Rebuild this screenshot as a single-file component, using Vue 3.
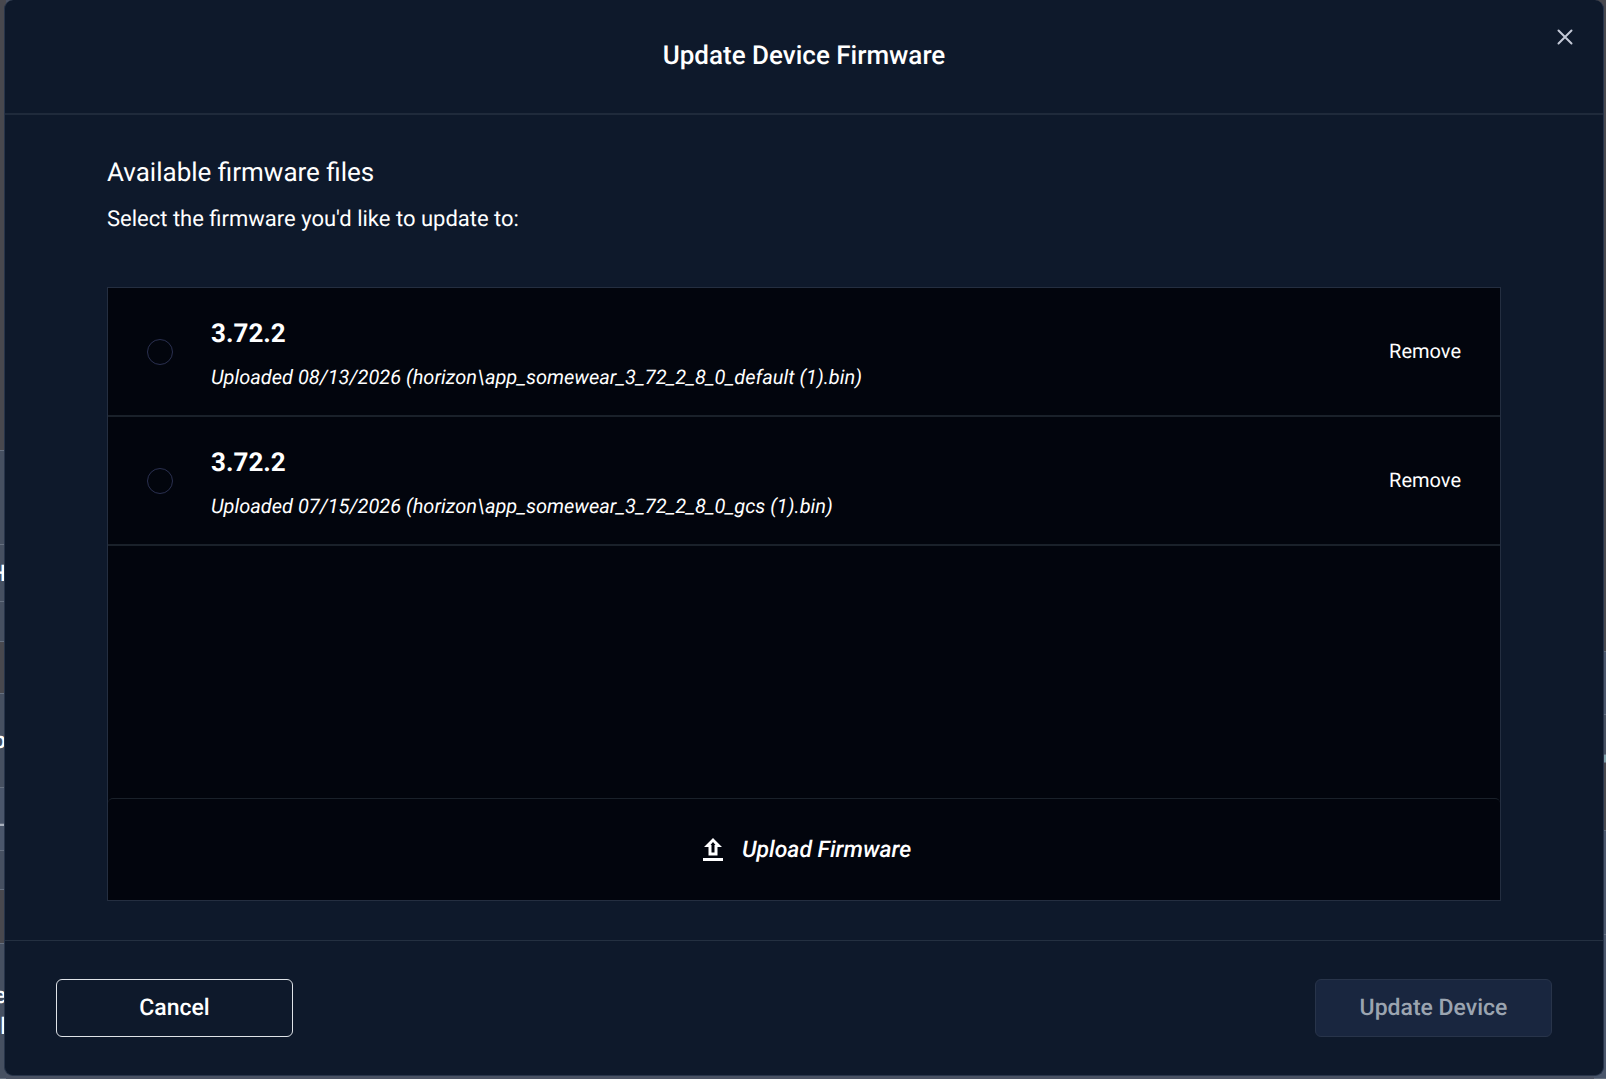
<script setup>
import { ref } from 'vue'

const selected = ref(null)

const files = [
  { id: 1, version: '3.72.2', detail: 'Uploaded 08/13/2026 (horizon\\app_somewear_3_72_2_8_0_default (1).bin)' },
  { id: 2, version: '3.72.2', detail: 'Uploaded 07/15/2026 (horizon\\app_somewear_3_72_2_8_0_gcs (1).bin)' },
]

// Cells of the page that stay visible at the sides of the dialog
const leftCells = [
  { size: 456, tone: 'warm', lines: [] },
  { size: 94, tone: 'cool', lines: [] },
  { size: 57, tone: 'cool', lines: ['H'] },
  { size: 39, tone: 'cool', lines: [] },
  { size: 52, tone: 'warm', lines: [] },
  { size: 94, tone: 'cool', lines: ['p'] },
  { size: 63, tone: 'blue', lines: ['L'] },
  { size: 39, tone: 'cool', lines: [] },
  { size: 53, tone: 'warm', lines: [] },
  { size: 136, tone: 'cool', lines: ['e', 'l'] },
]
const rightCells = [
  { size: 656, tone: 'warm' },
  { size: 63, tone: 'blue' },
  { size: 39, tone: 'cool' },
  { size: 7, tone: 'mark' },
  { size: 68, tone: 'warm' },
  { size: 104, tone: 'blue' },
  { size: 144, tone: 'blue' },
]
</script>

<template>
  <div class="screen">
    <div class="behind" aria-hidden="true">
      <div class="strip">
        <div v-for="(c, i) in leftCells" :key="i" class="cell" :class="c.tone" :style="{ flexGrow: c.size }">
          <span v-for="l in c.lines" :key="l">{{ l }}</span>
        </div>
      </div>
      <div class="strip narrow">
        <div v-for="(c, i) in rightCells" :key="i" class="cell" :class="c.tone" :style="{ flexGrow: c.size }"></div>
      </div>
    </div>

    <section class="dialog" role="dialog" aria-labelledby="dialog-title">
      <header class="head">
        <h1 id="dialog-title">Update Device Firmware</h1>
        <button class="close" type="button" aria-label="Close">
          <svg width="16" height="16" viewBox="0 0 16 16" fill="none" stroke="#c3c8d6" stroke-width="2" stroke-linecap="round">
            <path d="M1.5 1.5L14.5 14.5M14.5 1.5L1.5 14.5" />
          </svg>
        </button>
      </header>

      <div class="body">
        <h2>Available firmware files</h2>
        <p class="hint">Select the firmware you'd like to update to:</p>

        <div class="box">
          <ul class="files">
            <li v-for="f in files" :key="f.id" class="file">
              <input :id="'fw-' + f.id" v-model="selected" type="radio" name="firmware" :value="f.id" />
              <label :for="'fw-' + f.id">
                <strong>{{ f.version }}</strong>
                <em>{{ f.detail }}</em>
              </label>
              <button class="remove" type="button">Remove</button>
            </li>
          </ul>
          <button class="upload" type="button">
            <svg width="20" height="23" viewBox="0 0 20 23">
              <path fill="#fff" fill-rule="evenodd" d="M10 0L19 9H14.5V17.5H5.5V9H1ZM10 4L7.5 7H8.5V14.5H11.5V7H12.5Z" />
              <path fill="#fff" d="M0 20H20V23H0Z" />
            </svg>
            <span>Upload Firmware</span>
          </button>
        </div>
      </div>

      <footer class="foot">
        <button class="btn cancel" type="button">Cancel</button>
        <button class="btn update" type="button" disabled>Update Device</button>
      </footer>
    </section>
  </div>
</template>

<style>
body {
  background: #4a5263;
}
</style>

<style scoped>
.screen {
  position: relative;
  box-sizing: border-box;
  min-height: 100vh;
  padding: 0 2px 3px 4px;
  display: flex;
  background: #4a5263;
  color: #fff;
  font-family: Roboto, "Liberation Sans", sans-serif;
  text-rendering: geometricPrecision;
  overflow: hidden;
}
.behind {
  position: absolute;
  inset: 0;
  display: flex;
  justify-content: space-between;
}
.strip {
  width: 12px;
  display: flex;
  flex-direction: column;
}
.cell {
  box-sizing: border-box;
  flex: 1 1 0;
  min-height: 0;
  width: 6px;
  display: flex;
  flex-direction: column;
  align-items: flex-end;
  justify-content: center;
  overflow: hidden;
  border-bottom: 1px solid #667080;
  font-size: 23px;
  line-height: 31px;
  font-weight: 500;
}
.narrow .cell {
  width: 12px;
}
.warm {
  background: #48484e;
}
.cool {
  background: #465061;
}
.blue {
  background: #4a566b;
  color: #aab2bf;
}
.mark {
  background: #7fa0a8;
}
.dialog {
  position: relative;
  box-sizing: border-box;
  flex: 1;
  display: flex;
  flex-direction: column;
  background: #0e192b;
  border: 1px solid #27344a;
  border-top: 0;
  border-radius: 9px;
}
.head {
  display: flex;
  justify-content: center;
  align-items: center;
  height: 113px;
  border-bottom: 2px solid #1f2a3b;
}
h1,
h2 {
  margin: 0;
  font-size: 26px;
  line-height: 32px;
  font-weight: 500;
}
h1 {
  padding-bottom: 2px;
}
h2 {
  font-weight: 400;
}
button {
  font-family: inherit;
  color: inherit;
  text-rendering: inherit;
  cursor: pointer;
}
.close {
  position: absolute;
  top: 21px;
  right: 22px;
  width: 32px;
  height: 32px;
  padding: 0;
  border: 0;
  background: none;
  display: grid;
  place-items: center;
}
.body {
  flex: 1;
  display: flex;
  flex-direction: column;
  padding: 42px 102px 39px;
}
.hint {
  margin: 16px 0 52px;
  font-size: 22px;
  line-height: 30px;
}
.box {
  flex: 1;
  display: flex;
  flex-direction: column;
  background: #02050d;
  border: 1px solid #242e40;
}
.files {
  flex: 1;
  margin: 0;
  padding: 0;
  list-style: none;
}
.file {
  box-sizing: border-box;
  height: 129px;
  padding: 0 39px;
  display: flex;
  align-items: center;
  gap: 38px;
  border-bottom: 2px solid #1a212a;
}
.file input {
  appearance: none;
  box-sizing: border-box;
  width: 26px;
  height: 26px;
  margin: 0;
  border: 1px solid #2a3050;
  border-radius: 50%;
}
.file input:checked {
  border: 8px solid #fff;
}
label {
  flex: 1;
  padding-top: 7px;
  display: flex;
  flex-direction: column;
  gap: 13px;
}
label strong {
  font-size: 26px;
  line-height: 30px;
  font-weight: 700;
}
label em {
  font-size: 20px;
  line-height: 30px;
}
.remove {
  padding: 0 0 2px;
  border: 0;
  background: none;
  font-size: 20px;
  line-height: 30px;
}
.upload {
  height: 102px;
  padding: 0 0 0 6px;
  border: 0;
  border-top: 1px solid #1a212a;
  border-radius: 5px 5px 0 0;
  background: none;
  display: flex;
  align-items: center;
  justify-content: center;
  gap: 19px;
  font-size: 23px;
  line-height: 30px;
  font-weight: 500;
  font-style: italic;
}
.foot {
  display: flex;
  justify-content: space-between;
  align-items: center;
  padding: 38px 51px;
  border-top: 1px solid #243041;
}
.btn {
  box-sizing: border-box;
  width: 237px;
  height: 58px;
  padding: 0;
  border-radius: 6px;
  font-size: 23px;
  line-height: 30px;
  font-weight: 500;
}
.cancel {
  background: none;
  border: 1px solid #dfe3e8;
}
.update {
  background: #19263f;
  border: 1px solid #28344a;
  color: #9ba4b0;
  cursor: default;
}
</style>
